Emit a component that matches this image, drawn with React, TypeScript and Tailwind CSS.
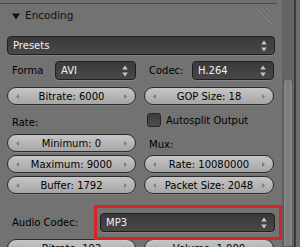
import React from 'react';

const font = { fontFamily: '"DejaVu Sans", "Liberation Sans", sans-serif' };

const UpDown: React.FC = () => (
  <svg width="6" height="12" viewBox="0 0 6 12" className="shrink-0">
    <path d="M3 0.5 L5.8 4.5 L0.2 4.5 Z" fill="#c4c4c4" />
    <path d="M3 11.5 L5.8 7.5 L0.2 7.5 Z" fill="#c4c4c4" />
  </svg>
);

const Dropdown: React.FC<{ label: string; className?: string }> = ({ label, className }) => (
  <div
    className={`h-[19px] flex items-center justify-between pl-[5px] pr-[7px] rounded-[4px] border border-[#1f1f1f] bg-gradient-to-b from-[#3a3a3a] to-[#484848] text-[#f2f2f2] text-[10px] shadow-[0_1px_0_rgba(255,255,255,0.12)] ${className || ''}`}
  >
    <span>{label}</span>
    <UpDown />
  </div>
);

const NumberField: React.FC<{ label: string }> = ({ label }) => (
  <div className="h-[18px] w-full flex items-center justify-between px-[8px] rounded-full border border-[#2a2a2a] bg-gradient-to-b from-[#c6c6c6] to-[#a6a6a6] text-black text-[10px] shadow-[0_1px_0_rgba(255,255,255,0.12)]">
    <svg width="3" height="5" viewBox="0 0 3 5">
      <path d="M3 0 L0 2.5 L3 5 Z" fill="#7c7c7c" />
    </svg>
    <span>{label}</span>
    <svg width="3" height="5" viewBox="0 0 3 5">
      <path d="M0 0 L3 2.5 L0 5 Z" fill="#7c7c7c" />
    </svg>
  </div>
);

const App: React.FC = () => {
  return (
    <div className="w-[300px] h-[247px] overflow-hidden flex bg-[#727272]" style={font}>
      {/* panel */}
      <div className="w-[282px] shrink-0 overflow-hidden">
        <div className="h-[3px] w-[277px] bg-[#6f6f6f]" />
        <div className="w-[277px] h-[25px] border-t border-[#4e4e4e] flex items-center pl-[12px]">
          <svg width="8" height="7" viewBox="0 0 8 7">
            <path d="M0 0.5 L8 0.5 L4 6.5 Z" fill="#111" />
          </svg>
          <span className="ml-[5px] text-[10.5px] text-[#111]">Encoding</span>
          <svg width="17" height="19" viewBox="0 0 17 19" className="ml-auto mr-[4px]">
            <path d="M1 1 L16 17" stroke="#8c8c8c" strokeWidth="1" />
            <path d="M2 1 L16 16" stroke="#5a5a5a" strokeWidth="0.6" />
            <path d="M6 1 L16 12" stroke="#8c8c8c" strokeWidth="1" />
            <path d="M7 1 L16 11" stroke="#5a5a5a" strokeWidth="0.6" />
            <path d="M11 1 L16 7" stroke="#8c8c8c" strokeWidth="1" />
            <path d="M12 1 L16 6" stroke="#5a5a5a" strokeWidth="0.6" />
          </svg>
        </div>

        <div className="pl-[7px] w-[275px] flex flex-col">
          <Dropdown label="Presets" className="mt-[8px]" />

          <div className="mt-[6px] flex gap-[8px]">
            <div className="w-[129px] flex items-center">
              <span className="w-[48px] pl-[5px] text-[10px] text-black">Forma</span>
              <Dropdown label="AVI" className="flex-1" />
            </div>
            <div className="w-[130px] flex items-center">
              <span className="w-[48px] pl-[5px] text-[10px] text-black">Codec:</span>
              <Dropdown label="H.264" className="flex-1" />
            </div>
          </div>

          <div className="mt-[7px] flex gap-[8px]">
            <div className="w-[129px]">
              <NumberField label="Bitrate: 6000" />
            </div>
            <div className="w-[130px]">
              <NumberField label="GOP Size: 18" />
            </div>
          </div>

          <div className="flex gap-[8px]">
            <div className="w-[129px] flex flex-col">
              <div className="mt-[8px] h-[18px] flex items-center pl-[5px] text-[10px] text-black">Rate:</div>
              <div className="mt-[3px]"><NumberField label="Minimum: 0" /></div>
              <div className="mt-[3px]"><NumberField label="Maximum: 9000" /></div>
              <div className="mt-[3px]"><NumberField label="Buffer: 1792" /></div>
            </div>
            <div className="w-[130px] flex flex-col">
              <div className="mt-[8px] h-[14px] flex items-center pl-[3px]">
                <div className="w-[14px] h-[14px] rounded-[3px] border border-[#262626] bg-gradient-to-b from-[#3c3c3c] to-[#4c4c4c]" />
                <span className="ml-[5px] text-[10px] text-black">Autosplit Output</span>
              </div>
              <div className="mt-[10px] h-[14px] flex items-center pl-[5px] text-[10px] text-black">Mux:</div>
              <div className="mt-[4px]"><NumberField label="Rate: 10080000" /></div>
              <div className="mt-[3px]"><NumberField label="Packet Size: 2048" /></div>
            </div>
          </div>

          <div className="mt-[19px] flex items-center">
            <span className="w-[93px] pl-[5px] text-[10px] text-black">Audio Codec:</span>
            <div className="relative flex-1">
              <Dropdown label="MP3" />
              <div className="absolute left-[-6px] right-[-7px] top-[-8px] bottom-[-8px] border-[3px] border-[#d42424] pointer-events-none" />
            </div>
          </div>

          <div className="mt-[7px] flex gap-[8px]">
            <div className="w-[129px]">
              <NumberField label="Bitrate: 192" />
            </div>
            <div className="w-[130px]">
              <NumberField label="Volume: 1.000" />
            </div>
          </div>
        </div>
      </div>

      {/* scrollbar */}
      <div className="w-[12px] h-full bg-[#646464] flex flex-col pl-[1px] pr-[1px]">
        <div className="mt-[78px] flex-1 rounded-t-full bg-gradient-to-r from-[#8a8a8a] via-[#7a7a7a] to-[#8a8a8a] border border-[#5a5a5a]" />
      </div>
      <div className="w-[2px] h-full bg-[#3a3a3a]" />
      <div className="flex-1 h-full bg-[#6e6e6e]" />
    </div>
  );
};

export default App;
